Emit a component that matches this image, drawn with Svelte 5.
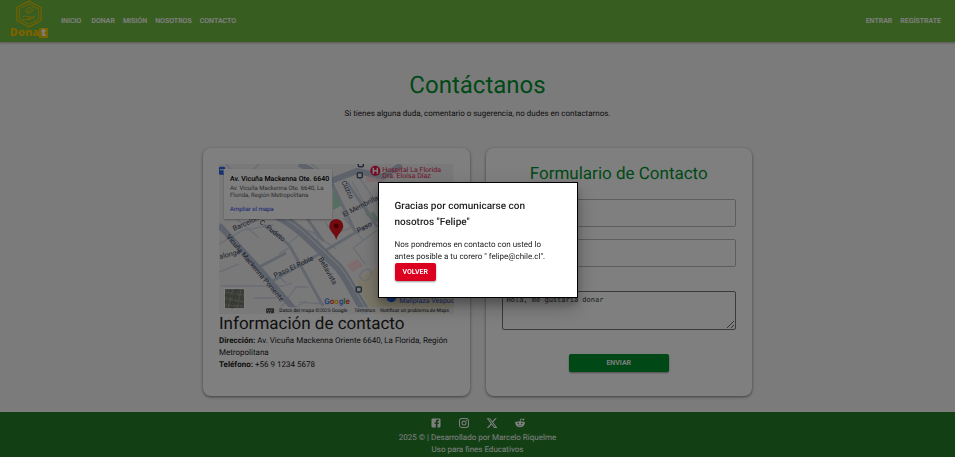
<script>
  const links = ['Inicio', 'Donar', 'Misión', 'Nosotros', 'Contacto'];
  const account = ['Entrar', 'Regístrate'];
  let open = $state(true);
  let name = $state('');
  let email = $state('');
  let message = $state('Hola, me gustaría donar');

  const icons = [
    { name: 'Facebook', path: 'M5 3h14a2 2 0 0 1 2 2v14a2 2 0 0 1-2 2h-4v-7h2.500l.5-3h-3V9.500c0-1 .4-1.500 1.500-1.500H18V5h-2.500C13 5 11.500 6.500 11.500 9v2H9v3h2.500v7H5a2 2 0 0 1-2-2V5a2 2 0 0 1 2-2z' },
    { name: 'Instagram', path: 'M7.800 2h8.400C19.400 2 22 4.600 22 7.800v8.400a5.800 5.800 0 0 1-5.800 5.800H7.800C4.600 22 2 19.400 2 16.200V7.800A5.800 5.800 0 0 1 7.800 2m-.2 2A3.600 3.600 0 0 0 4 7.600v8.800C4 18.390 5.610 20 7.600 20h8.800a3.600 3.600 0 0 0 3.600-3.600V7.600C20 5.610 18.390 4 16.400 4H7.600m9.650 1.500a1.250 1.250 0 1 1 0 2.500 1.250 1.250 0 0 1 0-2.500M12 7a5 5 0 1 1 0 10 5 5 0 0 1 0-10m0 2a3 3 0 1 0 0 6 3 3 0 0 0 0-6z' },
    { name: 'X', path: 'M18.240 2.250h3.310l-7.230 8.260 8.500 11.240h-6.660l-5.210-6.820-5.970 6.820H1.680l7.730-8.840L1.250 2.250h6.830l4.710 6.230zm-1.160 17.520h1.830L7.080 4.130H5.120z' },
    { name: 'Reddit', path: 'M22 11.500a2.300 2.300 0 0 0-4-1.600 12 12 0 0 0-5-1.400l1-3.700 3 .7a1.900 1.900 0 1 0 .2-1.400l-4.200-1-1.400 5.400a12 12 0 0 0-5.600 1.400 2.300 2.300 0 1 0-3 3.500C3 17.500 7 20.500 12 20.500s9-3 9-7.100c.6-.4 1-1.100 1-1.900zM8.500 11.500a1.500 1.500 0 1 1 0 3 1.500 1.500 0 0 1 0-3zm7 0a1.500 1.500 0 1 1 0 3 1.500 1.500 0 0 1 0-3zM12 18.500c-1.600 0-2.900-.5-3.700-1.300l.8-.8c1.400 1.200 4.400 1.200 5.800 0l.8.8c-.8.800-2.100 1.300-3.700 1.300z' }
  ];
</script>

<div class="page">
  <header>
    <a class="logo" href="#inicio" aria-label="Donat">
      <svg viewBox="0 0 28 30" fill="none" stroke="currentColor" aria-hidden="true">
        <path stroke-width="1.200" d="M14 1 27 8v14L14 29 1 22V8z" />
        <path stroke-width="1" d="M14 4 24.300 9.500v11L14 26 3.700 20.500v-11z" />
        <path stroke-width="1" d="M19 7l-2 2-3-1-3 2v3l2 1 3-1 1-2 3-1M13 11l2 1M7 18l3-1 3 1h3l1 1-4 1M17 19l4-2M7 21h7l3-1 3-2" />
      </svg>
      <span class="brand">Dona<b>t</b></span>
    </a>
    <nav>
      {#each links as link}<a href="#{link}">{link}</a>{/each}
    </nav>
    <nav class="account">
      {#each account as link}<a href="#{link}">{link}</a>{/each}
    </nav>
  </header>

  <main>
    <h1>Contáctanos</h1>
    <p class="lead">Si tienes alguna duda, comentario o sugerencia, no dudes en contactarnos.</p>

    <div class="cards">
      <section class="card">
        <div class="map">
          <svg viewBox="0 0 234 150" preserveAspectRatio="xMidYMid slice" role="img" aria-label="Mapa">
            <rect width="234" height="150" fill="#f3f3f5" />
            <path fill="#f7efd0" d="M137 116l22-14h75v48h-80l-14-26z" />
            <path fill="#ffd9dc" d="M128 101l10-6 6 7-11 6zM147 12l10-3 8 9h-18z" />
            <path fill="#a9dfbf" d="M114 25l9 16-9 5zM146 50l9 9 5-3-6-8z" />
            <g fill="none" stroke="#d5dbe6" stroke-width="1.500">
              <path d="M2 122h62l9-3M35 134h22M57 150l20-27h12M80 138l30 2M65 150l22-13M0 80l24-14 31-5M55 108l12 11M70 79l16-13 11 3 5 17M60 90l12-8M89 66l28 19M18 55l22 19M0 108l20-8M158 66l-24 18 12 16M124 54l20 22M106 58l8 12 20-7M131 62l-9-15M138 11l25 36M150 8l24 23M133 18l24 43M92 0l18 13M7 0l7 8M40 0l-9 9" />
              <path d="M140 112c5-9 11-8 12-3s-8 12-12 3z" />
            </g>
            <g fill="none" stroke="#c5ceda" stroke-width="3">
              <path d="M36 105l31-16M53 117l54-31 52-31M70 81l34 61M45 61l25 20M113 20l24 50M128 19l30 44M84 49l20 28" />
            </g>
            <g fill="none" stroke="#bdc7d6">
              <path stroke-width="6" d="M0 61l43 47 37 43" />
              <path stroke-width="9" d="M55 50c26 12 42 33 61 50 12 11 18 30 32 50" />
              <path stroke-width="6" d="M80 0l32 17 26-10 26 6 18-12" />
            </g>
            <path fill="none" stroke="#e8ebf0" d="M57 50c26 12 42 33 61 50 12 11 18 30 32 50" />
            <g class="road">
              <text transform="translate(7 73) rotate(50)">Vicuña Mackenna Poniente</text>
              <text transform="translate(1 95) rotate(-14)">alonge</text>
              <text transform="translate(15 67) rotate(-24)">Barcelona</text>
              <text transform="translate(40 59) rotate(38)">C. Pudeto</text>
              <text transform="translate(56 114) rotate(-25)">Paso El Roble</text>
              <text transform="translate(99 95) rotate(60)">Bellavista</text>
              <text transform="translate(125 53) rotate(-27)">El Membrillar</text>
              <text transform="translate(122 18) rotate(64)">Cuzco</text>
              <text transform="translate(139 69) rotate(-27)">Paso</text>
            </g>
            <g fill="#f3f3f5" stroke="#4c596e" stroke-width="1.500">
              <rect x="138" y="9" width="5" height="5" rx="1" />
              <rect x="139" y="-1" width="5" height="4" rx="1" />
              <rect x="137" y="123" width="5" height="5" rx="1" />
            </g>
            <rect y="3" width="6" height="8" rx="1" fill="#2864e8" />
            <path stroke="#fff" d="M1 6h4v4" fill="none" />
            <circle cx="156" cy="7" r="5" fill="#e9154c" />
            <path d="M154 4v6M158 4v6M154 7h4" stroke="#fff" stroke-width="1.500" />
            <g class="hospital"><text x="163" y="8">Hospital La Florida</text><text x="163" y="14">Dra. Eloísa Díaz</text></g>
            <circle cx="172" cy="133" r="5" fill="#2864e8" />
            <text class="mall" x="180" y="139">Mallplaza Vespuc</text>
            <path fill="#e5141e" d="M117 76c-1-6-7-9-7-14a7 7 0 0 1 14 0c0 5-6 8-7 14z" />
            <circle cx="117" cy="62" r="2.500" fill="#8c0008" />
            <rect x="5" y="124" width="21" height="21" rx="1" fill="#fff" />
            <rect x="6" y="125" width="19" height="19" fill="#777d70" />
            <path fill="none" stroke="#a89f92" stroke-dasharray="2 1" d="M6 128l19 3M6 134l19 4M9 144l5-19M18 144l4-19M6 141l19 1" />
            <path fill="none" stroke="#5d6b60" stroke-dasharray="1 2" stroke-width="2" d="M6 131l19 3M6 138l19 2M13 144l4-19" />
            <text class="google" x="105" y="140"><tspan fill="#4285f4">G</tspan><tspan fill="#ea4335">o</tspan><tspan fill="#fbbc05">o</tspan><tspan fill="#4285f4">g</tspan><tspan fill="#34a853">l</tspan><tspan fill="#ea4335">e</tspan></text>
            <rect x="47" y="143" width="187" height="7" fill="#f5f5f5" opacity=".75" />
            <rect x="47" y="144" width="8" height="5" rx="1" fill="#555" />
            <path d="M48 146h6M49 148h4" stroke="#ddd" stroke-dasharray="1 1" />
            <g class="legal">
              <text x="60" y="148">Datos del mapa ©2025 Google</text>
              <text x="135" y="148">Términos</text>
              <text x="161" y="148">Notificar un problema de Maps</text>
            </g>
          </svg>
          <div class="place">
            <strong>Av. Vicuña Mackenna Ote. 6640</strong>
            <p>Av. Vicuña Mackenna Ote. 6640, La Florida, Región Metropolitana</p>
            <a href="#mapa">Ampliar el mapa</a>
          </div>
        </div>
        <h2>Información de contacto</h2>
        <p><b>Dirección:</b> Av. Vicuña Mackenna Oriente 6640, La Florida, Región Metropolitana</p>
        <p><b>Teléfono:</b> +56 9 1234 5678</p>
      </section>

      <section class="card">
        <form onsubmit={(e) => { e.preventDefault(); open = true; }}>
          <h2>Formulario de Contacto</h2>
          <input aria-label="Nombre" bind:value={name} />
          <input aria-label="Correo" type="email" bind:value={email} />
          <textarea aria-label="Mensaje" bind:value={message}></textarea>
          <button class="send" type="submit">Enviar</button>
        </form>
      </section>
    </div>
  </main>

  <footer>
    <div class="social">
      {#each icons as icon}
        <a href="#{icon.name}" aria-label={icon.name}>
          <svg viewBox="0 0 24 24" fill="currentColor" fill-rule="evenodd"><path d={icon.path} /></svg>
        </a>
      {/each}
    </div>
    <p>2025 © | Desarrollado por Marcelo Riquelme</p>
    <p>Uso para fines Educativos</p>
  </footer>
</div>

{#if open}
  <div class="backdrop">
    <div class="modal" role="dialog" aria-modal="true" aria-labelledby="thanks">
      <h3 id="thanks">Gracias por comunicarse con nosotros "Felipe"</h3>
      <p>Nos pondremos en contacto con usted lo antes posible a tu corero " felipe@chile.cl".</p>
      <button class="back" onclick={() => (open = false)}>Volver</button>
    </div>
  </div>
{/if}

<style>
  :global(body) { margin: 0; text-rendering: geometricPrecision; }
  * { box-sizing: border-box; }
  h1, h2, h3, p { margin: 0; font-weight: 400; }
  a { color: inherit; text-decoration: none; }
  svg { display: block; }
  .page, .modal { font: 8px/12px Roboto, sans-serif; color: #222; }
  .page { min-height: 100vh; display: flex; flex-direction: column; background: #f6f6f6; }

  header {
    display: flex; align-items: center; height: 42px; padding: 0 14px 0 9px;
    background: #6fba40; color: #fff; box-shadow: 0 1px 2px rgba(0, 0, 0, .3);
  }
  .logo { display: flex; flex-direction: column; align-items: center; width: 40px; margin-right: 12px; padding-bottom: 4px; color: #f0c400; }
  .logo svg { width: 28px; height: 28px; }
  .brand { display: flex; font: 800 11px/10px "Open Sans", sans-serif; }
  .brand b { background: #f0c400; color: #fff; padding: 0 2px; }
  nav { display: flex; gap: 8px; font-size: 7px; font-weight: 600; text-transform: uppercase; }
  nav a:first-child { margin-right: 2px; }
  .account a:first-child { margin-right: 0; }
  .account { margin-left: auto; }

  main { flex: 1; padding: 28px 16px 16px; }
  h1 { font-size: 24px; line-height: 30px; text-align: center; color: #00932f; }
  .lead { margin-top: 8px; text-align: center; }
  .cards { display: grid; grid-template-columns: 1fr 1fr; gap: 16px; max-width: 549px; margin: 28px auto 0; }
  .card {
    min-height: 248px; padding: 16px; border-radius: 8px; background: #fff;
    box-shadow: 0 1px 3px rgba(0, 0, 0, .5);
  }
  h2 { font-size: 17px; line-height: 21px; }

  .map { position: relative; height: 150px; overflow: hidden; }
  .map svg { width: 100%; height: 100%; }
  .place {
    position: absolute; top: 5px; left: 5px; width: 108px; height: 50px; padding: 6px;
    background: #fff; font-size: 6px; line-height: 7px; color: #555;
    box-shadow: 0 1px 2px rgba(0, 0, 0, .3);
  }
  .place strong { display: block; font-size: 7px; line-height: 8px; font-weight: 500; color: #000; white-space: nowrap; }
  .place p { margin: 2px 0 7px; }
  .place a { display: block; color: #1a3be8; }
  .road { font-size: 7px; fill: #3c4452; }
  .hospital { font-size: 7px; fill: #e01e50; }
  .mall { font-size: 7px; fill: #3058e0; }
  .google { font-size: 8px; font-weight: 700; }
  .legal { font-size: 5px; fill: #111; }

  form { display: flex; flex-direction: column; }
  form h2 { text-align: center; color: #00932f; margin-bottom: 14px; }
  input, textarea { width: 100%; border: 1px solid #bbb; border-radius: 2px; background: transparent; }
  input { height: 28px; margin-bottom: 12px; padding: 0 7px; font: 8px Roboto, sans-serif; }
  textarea { height: 39px; margin-top: 12px; padding: 4px; border-color: #767676; color: #333; font: 7px/8px "DejaVu Sans Mono", monospace; }
  button {
    height: 18px; border: 0; border-radius: 2px; color: #fff;
    font: 600 7px/12px Roboto, sans-serif; text-transform: uppercase;
    box-shadow: 0 1px 2px rgba(0, 0, 0, .4);
  }
  .send { width: 100px; margin: 24px auto 0; background: #00932f; }
  .back { display: block; padding: 0 8px; background: #dc0020; }

  footer { padding: 5px 0 1px; background: #248028; color: #fff; text-align: center; }
  .social { display: flex; justify-content: center; gap: 16px; margin-bottom: 3px; }
  .social svg { width: 12px; height: 12px; }

  .backdrop {
    position: fixed; inset: 0; display: flex; align-items: center; justify-content: center;
    padding-top: 22px; background: rgba(0, 0, 0, .5);
  }
  .modal {
    width: 200px; padding: 16px; border: 1px solid #000; background: #fff;
    box-shadow: 0 6px 8px rgba(0, 0, 0, .2), 0 12px 19px rgba(0, 0, 0, .15), 0 5px 23px rgba(0, 0, 0, .12);
  }
  .modal h3 { margin-bottom: 8px; font-size: 10px; line-height: 16px; font-weight: 500; }
</style>
